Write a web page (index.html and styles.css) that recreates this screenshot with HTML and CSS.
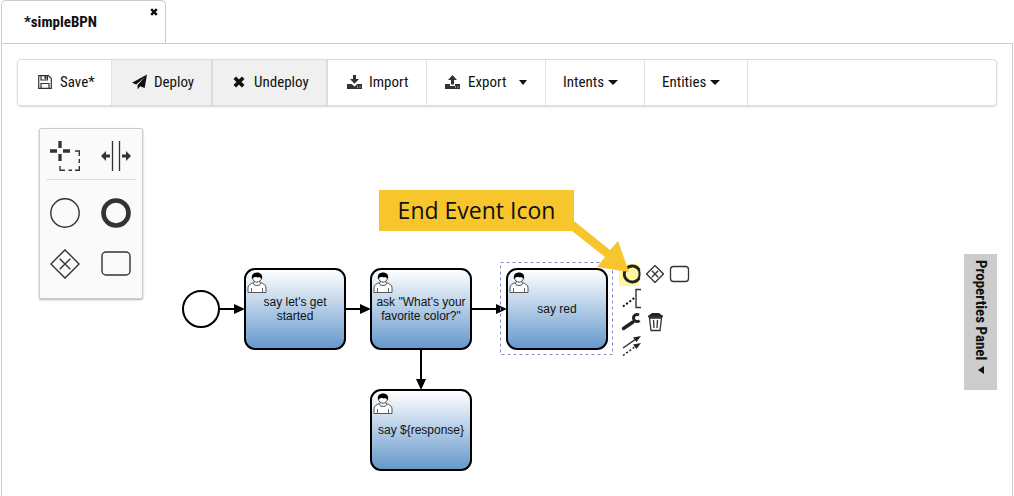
FILE: index.html
```html
<!DOCTYPE html>
<html lang="en">
<head>
<meta charset="utf-8">
<title>simpleBPN</title>
<link rel="stylesheet" href="styles.css">
</head>
<body>
<svg class="defs" width="0" height="0" aria-hidden="true">
  <symbol id="user" viewBox="0 0 20 22">
    <path d="M6.500 10.500 C3 12 1 13 1 16 V20.500 H19 V16 C19 13 17 12 13.500 10.500 C14.500 14.500 5.500 14.500 6.500 10.500 Z" fill="#fff" stroke="#444" stroke-width=".9"/>
    <path d="M7.500 9 L6.500 11.500 C7 14 13 14 13.500 11.500 L12.500 9" fill="#fff" stroke="#555" stroke-width=".8"/>
    <circle cx="10" cy="5.800" r="4.400" fill="#fff" stroke="#222" stroke-width=".8"/>
    <path d="M5 7 C4 2.500 6.800 .5 10 .5 C13.200 .5 16 2.500 15 7 C13.500 5 12 4.800 10.500 5.500 C8.500 4.500 7 5 5 7 Z" fill="#000"/>
    <path d="M4.500 16 V20.500 M15.500 16 V20.500" stroke="#555" stroke-width=".9"/>
  </symbol>
  <symbol id="gateway" viewBox="0 0 30 30">
    <path d="M15 .9 L29.100 15 L15 29.100 L.9 15 Z M9.700 9.700 L20.300 20.300 M20.300 9.700 L9.700 20.300" fill="none" stroke="#333"/>
  </symbol>
  <symbol id="cross" viewBox="0 0 10 10">
    <path d="M1.500 1.500 L8.500 8.500 M8.500 1.500 L1.500 8.500" fill="none" stroke="#111" stroke-width="3.100"/>
  </symbol>
</svg>

<header class="tabs">
  <div class="tab">
    <span class="tab-title">*simpleBPN</span>
    <button class="tab-close" aria-label="Close tab"><svg width="8" height="8"><use href="#cross"/></svg></button>
  </div>
</header>

<main class="panel">
  <nav class="toolbar">
    <button class="tool save">
      <svg width="14" height="14" viewBox="0 0 14 14"><path d="M.7.7 H10.500 L13.300 3.500 V13.300 H.7 Z M3 13 V8.500 H11 V13 M3 .7 V5 H9.500 V.7" fill="none" stroke="#333" stroke-width="1.200"/><path d="M6.500 1 H8.500 V4 H6.500 Z" fill="#333"/></svg>
      <span>Save*</span>
    </button>
    <button class="tool shaded deploy">
      <svg width="15" height="16" viewBox="0 0 16 16"><path d="M16 0 L13.500 14.500 L8.700 12.500 L6 16 V11.300 L13.500 3 L4.500 10.600 L0 8.800 Z" fill="#111"/></svg>
      <span>Deploy</span>
    </button>
    <button class="tool shaded undeploy">
      <svg width="12" height="12"><use href="#cross"/></svg>
      <span>Undeploy</span>
    </button>
    <button class="tool import">
      <svg width="15" height="14" viewBox="0 0 15 14"><path d="M6 0 H9 V4 H12 L7.500 8.800 L3 4 H6 Z" fill="#333"/><path d="M0 9 H4.500 L7.500 11.500 L10.500 9 H15 V14 H0 Z" fill="#333"/><path d="M10 12 H11 M12.500 12 H13.500" stroke="#fff"/></svg>
      <span>Import</span>
    </button>
    <button class="tool export">
      <svg width="15" height="14" viewBox="0 0 15 14"><path d="M6 9.500 H9 V5 H12 L7.500 0 L3 5 H6 Z" fill="#333"/><path d="M0 9 H5 V11 H10 V9 H15 V14 H0 Z" fill="#333"/><path d="M10 12 H11 M12.500 12 H13.500" stroke="#fff"/></svg>
      <span>Export</span><i class="caret"></i>
    </button>
    <button class="tool intents"><span>Intents</span><i class="caret wide"></i></button>
    <button class="tool entities"><span>Entities</span><i class="caret wide"></i></button>
  </nav>

  <section class="workspace">
    <aside class="palette" aria-label="Shapes">
      <div class="group top">
        <button aria-label="Lasso tool"><svg width="30" height="30" viewBox="0 0 30 30" fill="none" stroke="#333"><path d="M10 0 V7 M10 13 V20 M0 10 H7 M13 10 H20" stroke-width="3.300"/><path d="M25 10 H29.300 V15 M29.300 18 V22 M29.300 25 V29.300 H25 M22 29.300 H18.500 M15 29.300 H10 V25" stroke-width="1.400"/></svg></button>
        <button aria-label="Space tool"><svg width="30" height="30" viewBox="0 0 30 30"><path d="M11.500 0 V30 M18.500 0 V30" stroke="#333" stroke-width="1.300"/><path d="M0 15 L5 10 V13.400 H9 V16.600 H5 V20 Z M30 15 L25 10 V13.400 H21 V16.600 H25 V20 Z" fill="#333"/></svg></button>
      </div>
      <div class="group shapes">
        <button aria-label="Start event"><svg width="30" height="30"><circle cx="15" cy="15" r="14.200" fill="none" stroke="#333" stroke-width="1.400"/></svg></button>
        <button aria-label="End event"><svg width="30" height="30"><circle cx="15" cy="15" r="12.500" fill="none" stroke="#333" stroke-width="4.600"/></svg></button>
        <button aria-label="Gateway"><svg width="30" height="30" stroke-width="1.400"><use href="#gateway"/></svg></button>
        <button aria-label="Task"><svg width="30" height="30"><rect x="1" y="3" width="28" height="23" rx="4" fill="none" stroke="#333" stroke-width="1.400"/></svg></button>
      </div>
    </aside>

    <div class="canvas">
      <svg class="flows" width="600" height="390" aria-hidden="true">
        <g fill="none" stroke="#000" stroke-width="2">
          <circle cx="58" cy="203" r="18"/>
          <path d="M77 203 H93 M203 203 H219 M329 203 H355 M278 244 V275"/>
        </g>
        <path d="M91 198 L102 203 L91 208 Z M217 198 L228 203 L217 208 Z M353 198 L364 203 L353 208 Z M273 273 L278 284 L283 273 Z"/>
        <rect x="357.500" y="156.500" width="112" height="92" fill="none" stroke="#8888cc" stroke-dasharray="3 3"/>
      </svg>
      <div class="task greet"><svg class="user" width="20" height="22"><use href="#user"/></svg>say let's get<br>started</div>
      <div class="task ask"><svg class="user" width="20" height="22"><use href="#user"/></svg>ask "What's your<br>favorite color?"</div>
      <div class="task red"><svg class="user" width="20" height="22"><use href="#user"/></svg>say red</div>
      <div class="task response"><svg class="user" width="20" height="22"><use href="#user"/></svg>say ${response}</div>

      <div class="context-pad">
        <button class="highlight" aria-label="Append end event"><svg width="24" height="24" viewBox="0 0 24 24"><path d="M20.300 8.200 A8 8 0 1 0 20.300 15.800" fill="none" stroke="#222" stroke-width="2.800"/><path d="M19.500 7 C21 10.500 21 13.500 19.500 17" fill="none" stroke="#222" stroke-width="2"/></svg></button>
        <button aria-label="Append gateway"><svg width="18" height="18" stroke-width="2.200"><use href="#gateway"/></svg></button>
        <button aria-label="Append task"><svg width="24" height="24"><rect x="3.500" y="4.500" width="18" height="15" rx="3" fill="none" stroke="#333" stroke-width="1.300"/></svg></button>
        <button aria-label="Text annotation"><svg width="24" height="24" fill="none" stroke="#333"><path d="M22 3.500 H17 V21.500 H22" stroke-width="1.400"/><path d="M4 20.500 L16 11.500" stroke="#111" stroke-width="2" stroke-dasharray="2 2"/></svg></button>
        <span></span><span></span>
        <button aria-label="Change type"><svg width="24" height="24"><path d="M4.500 18.500 L14 12" stroke="#222" stroke-width="3.400" stroke-linecap="round"/><path d="M20 5 C17 3.500 14.300 5.500 14.500 8.500 C15 11.500 18.500 12.500 20.500 10.500" fill="none" stroke="#222" stroke-width="3"/></svg></button>
        <button aria-label="Remove"><svg width="24" height="24"><path d="M5 6 L9 3 H16 L20 6 Z" fill="#222"/><path d="M5 6.500 H20 M6.500 8 L8 20.500 H17 L18.500 8 Z M10.500 10 L11 18 M14.500 10 L14 18" fill="none" stroke="#333" stroke-width="1.300"/></svg></button>
        <span></span>
        <button aria-label="Connect"><svg width="24" height="24"><path d="M4 14 L17 5" stroke="#222" stroke-width="1.300"/><path d="M4 21.500 L17 12" stroke="#222" stroke-width="1.500" stroke-dasharray="2 2"/><path d="M22 2 L17.500 8 L14 3.500 Z M22 9 L17.500 15 L14 10.500 Z" fill="#222"/></svg></button>
      </div>

      <svg class="pointer" width="600" height="200" aria-hidden="true"><path d="M420 105 L431 115 L467 144 L475 135 L486 166 L454 161 L462 151 L429 125 Z" fill="#f6c62c"/></svg>
      <div class="callout">End Event Icon</div>
    </div>

    <button class="properties"><span>Properties Panel</span><i class="caret-side"></i></button>
  </section>
</main>
</body>
</html>
```
FILE: styles.css
```css
* { box-sizing: border-box; }
body {
  margin: 0;
  padding: 0 1px;
  min-height: 100vh;
  display: flex;
  flex-direction: column;
  background: #fff;
  color: #111;
  font-family: "Roboto Condensed", "Liberation Sans Narrow", Roboto, sans-serif;
  font-size: 15px;
}
.defs { position: absolute; }
button {
  border: 0;
  margin: 0;
  padding: 0;
  background: none;
  color: inherit;
  font: inherit;
}
svg { display: block; flex: none; }

.tabs { display: flex; height: 43px; }
.tab {
  display: flex;
  justify-content: space-between;
  align-items: flex-start;
  width: 165px;
  padding: 7px 7px 0 22px;
  border: 1px solid #ccc;
  border-bottom: 0;
  border-radius: 5px 5px 0 0;
}
.tab-title { padding-top: 4px; font-weight: 700; line-height: 20px; }

.panel {
  flex: 1;
  display: flex;
  flex-direction: column;
  padding-top: 15px;
  border: 1px solid #ccc;
  border-bottom: 0;
}
.toolbar {
  display: flex;
  height: 47px;
  margin: 0 15px;
  border: 1px solid #ddd;
  border-radius: 4px;
  box-shadow: 0 1px 2px rgba(0, 0, 0, .16);
}
.tool {
  display: flex;
  align-items: center;
  gap: 8px;
  padding: 0 0 1px 20px;
  border-right: 1px solid #e2e2e2;
  white-space: nowrap;
}
.shaded { background: #f0f0f0; border-right: 2px solid #dcdcdc; }
.save { width: 94px; }
.deploy { width: 101px; gap: 7px; }
.undeploy { width: 115px; gap: 9px; }
.import { width: 99px; gap: 7px; padding-left: 19px; }
.export { width: 119px; padding-left: 18px; }
.intents { width: 99px; padding-left: 17px; gap: 4px; }
.entities { width: 103px; padding-left: 17px; gap: 4px; }
.caret {
  margin-left: 5px;
  border: 4px solid transparent;
  border-top: 5px solid #111;
  border-bottom: 0;
}
.wide { margin-left: 0; border-width: 5px 5px 0; }

.workspace { flex: 1; display: flex; align-items: flex-start; }
.palette {
  flex: none;
  width: 104px;
  margin: 22px 0 0 37px;
  padding: 12px 6px 19px;
  background: #fafafa;
  border: 1px solid #ccc;
  border-radius: 2px;
  box-shadow: 0 1px 2px rgba(0, 0, 0, .3);
}
.group {
  display: grid;
  grid-template-columns: 30px 30px;
  column-gap: 21px;
  row-gap: 21px;
  padding: 0 5px 0 4px;
}
.top { padding-bottom: 8px; border-bottom: 1px solid #ddd; }
.shapes { padding-top: 18px; }

.canvas { position: relative; flex: 1; align-self: stretch; }
.flows, .pointer { position: absolute; left: 0; top: 0; pointer-events: none; }
.task {
  position: absolute;
  display: flex;
  align-items: center;
  justify-content: center;
  width: 102px;
  height: 82px;
  border: 2px solid #000;
  border-radius: 11px;
  background: linear-gradient(#fff, #6699cc);
  font: 12px/14px "Liberation Sans", Arial, sans-serif;
  text-align: center;
  white-space: pre;
  flex-wrap: wrap;
  align-content: center;
}
.greet { left: 101px; top: 162px; }
.ask { left: 227px; top: 162px; }
.red { left: 363px; top: 162px; }
.response { left: 227px; top: 283px; }
.user { position: absolute; left: 1px; top: 2px; }

.context-pad {
  position: absolute;
  left: 476px;
  top: 156px;
  display: grid;
  grid-template-columns: repeat(3, 24px);
  grid-auto-rows: 24px;
}
.context-pad button { display: grid; place-items: center; }
.highlight { background: linear-gradient(#fff6a0, #fff6a0) 0 2px / 20px 22px no-repeat; }
.callout {
  position: absolute;
  left: 236px;
  top: 84px;
  width: 195px;
  text-align: center;
  background: #f6c62c;
  color: #111;
  font: 23px/41px "Open Sans", Lato, sans-serif;
  white-space: nowrap;
}

.properties {
  flex: none;
  display: flex;
  align-items: center;
  gap: 6px;
  width: 33px;
  height: 136px;
  margin: 148px 15px 0 0;
  padding-top: 6px;
  background: #ccc;
  font-weight: 700;
  writing-mode: vertical-rl;
  white-space: nowrap;
}
.caret-side {
  border: 4px solid transparent;
  border-right: 6px solid #111;
  border-left: 0;
}
```
